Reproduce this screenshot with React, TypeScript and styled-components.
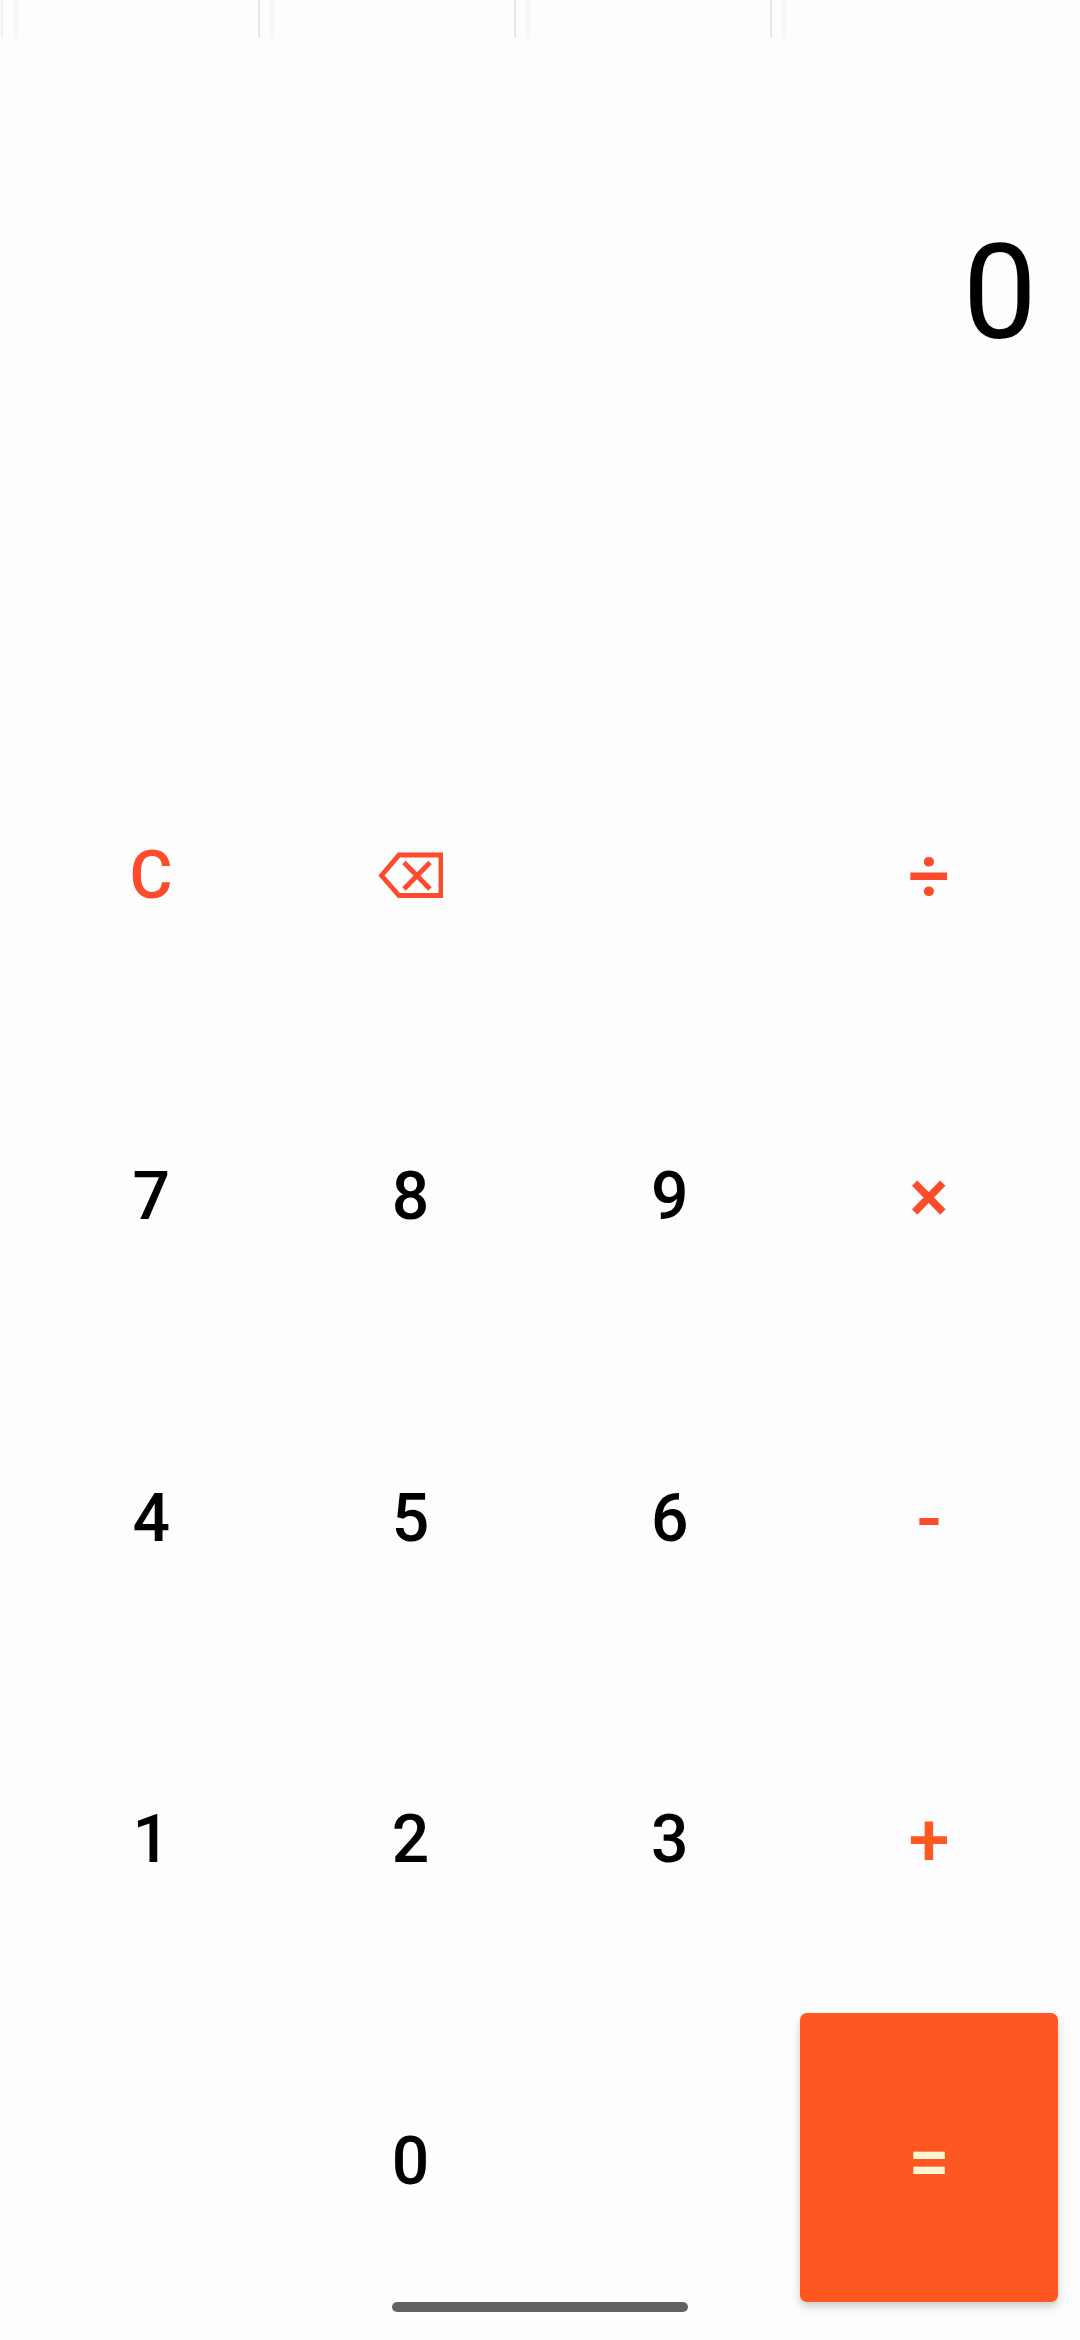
import React from 'react';
import styled, { createGlobalStyle } from 'styled-components';

const Global = createGlobalStyle`
  * { box-sizing: border-box; }
  body { margin: 0; background: #fdfdfd; }
`;

const Screen = styled.main`
  position: relative;
  display: flex;
  flex-direction: column;
  width: 1080px;
  height: 2340px;
  overflow: hidden;
  background: #fdfdfd;
  font-family: Roboto, 'Liberation Sans', sans-serif;
`;

const Seams = styled.div`
  display: flex;
  gap: 10px;
  height: 38px;
  margin-left: 1px;
  padding-left: 11px;
  border-left: 2px solid #f0f0f1;
`;

const Seam = styled.div`
  width: 246px;
  border-left: 4px solid #f6f6f7;
  border-right: 2px solid #e9e9eb;
  &:last-child { flex: 1; border-right: 0; }
`;

const Display = styled.output`
  display: block;
  height: 673px;
  padding: 178px 43px 0 0;
  text-align: right;
  font-size: 132px;
  line-height: 155px;
  color: #000;
`;

const Keypad = styled.div`
  display: grid;
  grid-template-columns: repeat(4, 259.3px);
  grid-template-rows: repeat(5, 321.5px);
  padding-left: 21px;
`;

const Key = styled.button<{ $accent?: string; $filled?: boolean; $operator?: boolean }>`
  display: flex;
  align-items: center;
  justify-content: center;
  margin: 16px 0 17px 1px;
  padding: 9px 0 0;
  border: 0;
  border-radius: 7px;
  font: 500 ${p => (p.$operator ? 74 : 66)}px/78px Roboto, 'Liberation Sans', sans-serif;
  color: ${p => (p.$filled ? '#fff6d6' : p.$accent ?? '#000')};
  background: ${p => (p.$filled ? '#ff5722' : 'transparent')};
  box-shadow: ${p => (p.$filled ? '0 5px 9px rgba(90, 90, 60, 0.28)' : 'none')};
`;

const NavHandle = styled.div`
  position: absolute;
  left: 392px;
  bottom: 28px;
  width: 296px;
  height: 10px;
  border-radius: 5px;
  background: #636363;
`;

const RED = '#fd4b2c';
const ORANGE = '#ff5722';

const Backspace = () => (
  <svg width="66" height="48" viewBox="0 0 66 48" fill="none" stroke={RED} strokeWidth="4.8">
    <path d="M4.5 23.5 L22 3 H64 V43.5 H22 Z" />
    <path d="M27 10.5 L53 37 M53 10.5 L27 37" />
  </svg>
);

type KeySpec = {
  label: React.ReactNode;
  name?: string;
  accent?: string;
  filled?: boolean;
  operator?: boolean;
};

const keys: KeySpec[] = [
  { label: 'C', accent: RED },
  { label: <Backspace />, name: 'Backspace', accent: RED },
  { label: null },
  { label: '÷', accent: RED, operator: true },
  { label: '7' }, { label: '8' }, { label: '9' }, { label: '×', accent: RED, operator: true },
  { label: '4' }, { label: '5' }, { label: '6' }, { label: '-', accent: RED, operator: true },
  { label: '1' }, { label: '2' }, { label: '3' }, { label: '+', accent: ORANGE, operator: true },
  { label: null }, { label: '0' }, { label: null }, { label: '=', filled: true, operator: true },
];

export default function App() {
  return (
    <Screen>
      <Global />
      <Seams><Seam /><Seam /><Seam /><Seam /></Seams>
      <Display>0</Display>
      <Keypad>
        {keys.map((k, i) =>
          k.label === null ? <span key={i} /> : (
            <Key
              key={i}
              aria-label={k.name}
              $accent={k.accent}
              $filled={k.filled}
              $operator={k.operator}
            >
              {k.label}
            </Key>
          ),
        )}
      </Keypad>
      <NavHandle />
    </Screen>
  );
}
